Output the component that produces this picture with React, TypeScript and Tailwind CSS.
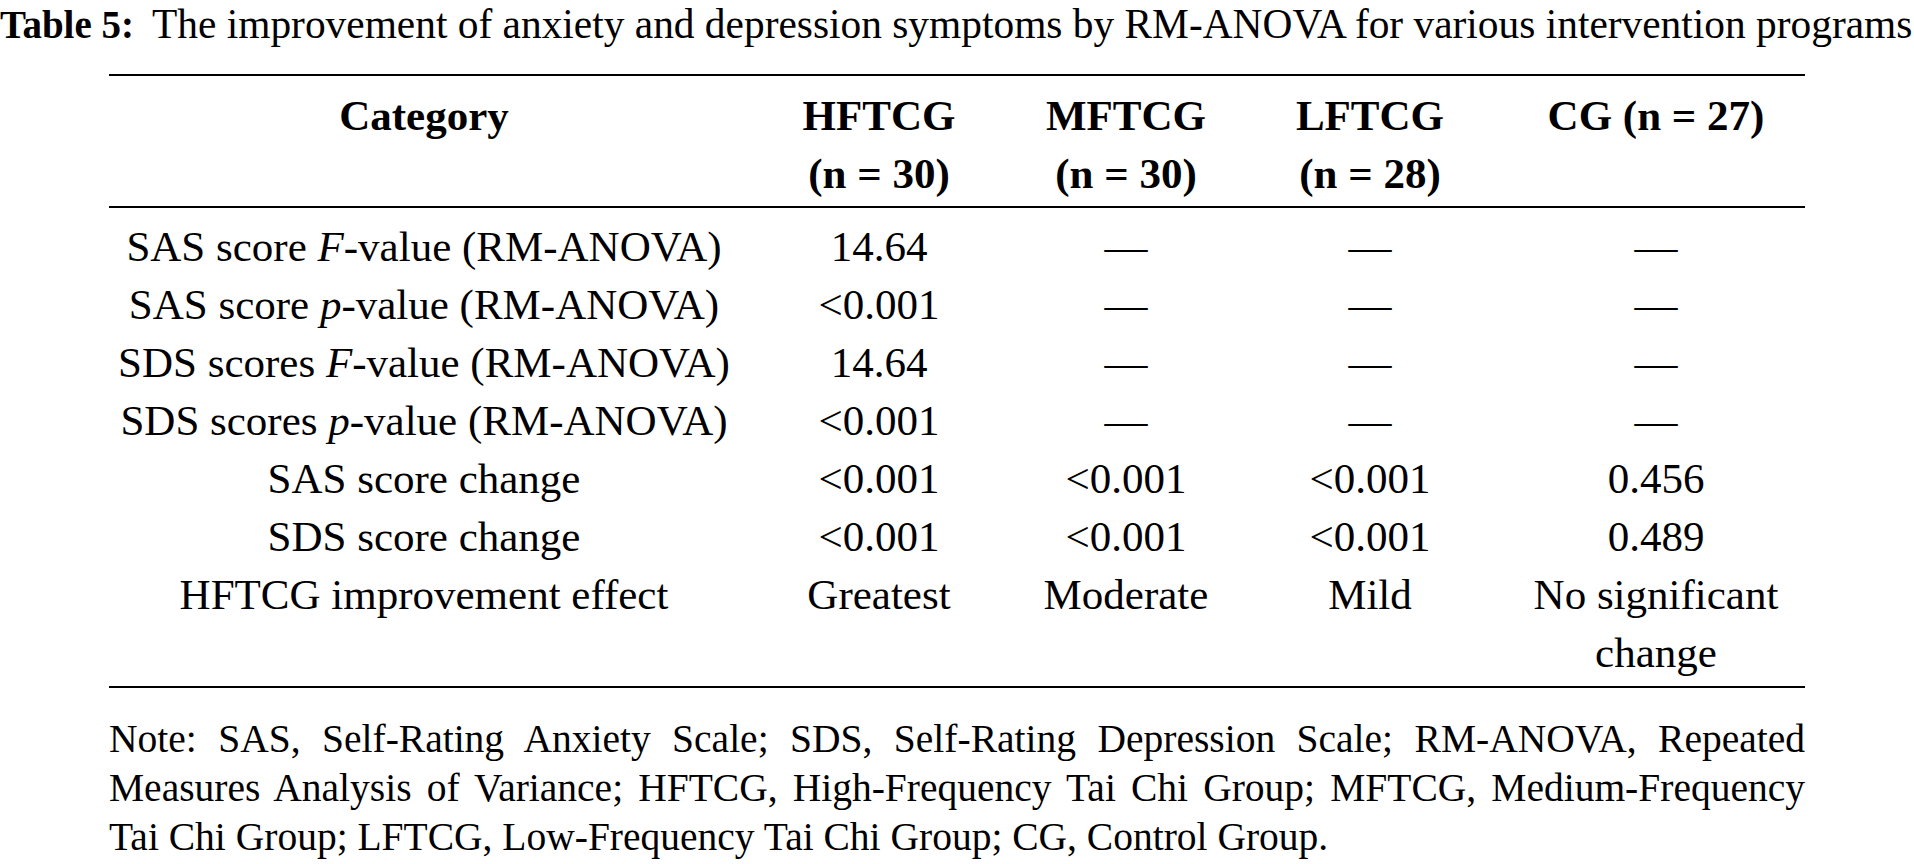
const header = [
  ["Category"],
  ["HFTCG", "(n = 30)"],
  ["MFTCG", "(n = 30)"],
  ["LFTCG", "(n = 28)"],
  ["CG (n = 27)"],
];

const dash = "\u2014";

type Row = { label: React.ReactNode; cells: string[] };

const rows: Row[] = [
  {
    label: (
      <>
        SAS score <i>F</i>-value (RM-ANOVA)
      </>
    ),
    cells: ["14.64", dash, dash, dash],
  },
  {
    label: (
      <>
        SAS score <i>p</i>-value (RM-ANOVA)
      </>
    ),
    cells: ["<0.001", dash, dash, dash],
  },
  {
    label: (
      <>
        SDS scores <i>F</i>-value (RM-ANOVA)
      </>
    ),
    cells: ["14.64", dash, dash, dash],
  },
  {
    label: (
      <>
        SDS scores <i>p</i>-value (RM-ANOVA)
      </>
    ),
    cells: ["<0.001", dash, dash, dash],
  },
  { label: "SAS score change", cells: ["<0.001", "<0.001", "<0.001", "0.456"] },
  { label: "SDS score change", cells: ["<0.001", "<0.001", "<0.001", "0.489"] },
  {
    label: "HFTCG improvement effect",
    cells: ["Greatest", "Moderate", "Mild", "No significant change"],
  },
];

const cols = "grid grid-cols-[630px_280px_214px_274px_298px]";

export default function App() {
  return (
    <div className="h-[864px] w-[1914px] overflow-hidden bg-white font-['Liberation_Serif',serif] text-black">
      <p className="whitespace-nowrap pt-[6px] text-[41.4px] leading-[36px]">
        <b className="text-[39px]">Table 5:</b>
        <span className="ml-[18px]">
          The improvement of anxiety and depression symptoms by RM-ANOVA for
          various intervention programs
        </span>
      </p>

      <div className="ml-[109px] mt-[31px] w-[1696px]">
        <div
          className={`${cols} border-y-2 border-black pt-[11px] pb-[4px] text-center text-[43px] font-bold leading-[57.5px]`}
        >
          {header.map((lines, i) => (
            <div key={i}>
              {lines.map((line) => (
                <div key={line}>{line}</div>
              ))}
            </div>
          ))}
        </div>

        <div
          className={`${cols} items-start border-b-2 border-black pt-[10px] pb-[4px] text-center text-[43px] leading-[58px]`}
        >
          {rows.map((row, r) => (
            <div key={r} className="contents">
              <div>{row.label}</div>
              {row.cells.map((cell, c) => (
                <div key={c} className={c === 3 ? "px-[20px]" : ""}>
                  {cell}
                </div>
              ))}
            </div>
          ))}
        </div>

        <p className="mt-[27px] text-justify text-[39.5px] leading-[49px]">
          Note: SAS, Self-Rating Anxiety Scale; SDS, Self-Rating Depression
          Scale; RM-ANOVA, Repeated Measures Analysis of Variance; HFTCG,
          High-Frequency Tai Chi Group; MFTCG, Medium-Frequency Tai Chi Group;
          LFTCG, Low-Frequency Tai Chi Group; CG, Control Group.
        </p>
      </div>
    </div>
  );
}
